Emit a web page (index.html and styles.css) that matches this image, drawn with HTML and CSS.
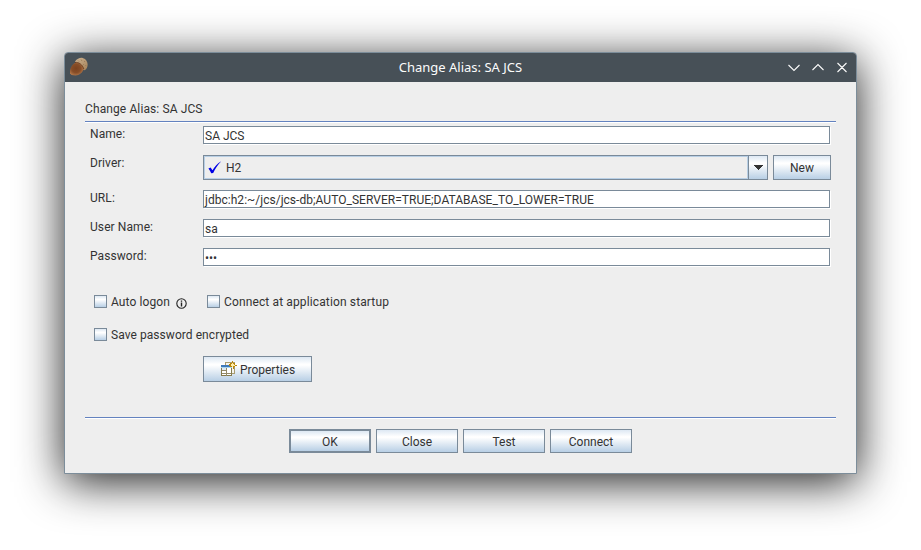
FILE: index.html
```html
<!DOCTYPE html>
<html lang="en">
<head>
<meta charset="utf-8">
<title>Change Alias: SA JCS</title>
<link rel="stylesheet" href="styles.css">
</head>
<body>
<main class="window">
  <header class="titlebar">
    <svg class="acorn" width="20" height="20" viewBox="0 0 20 20">
      <defs>
        <radialGradient id="nut" cx=".45" cy=".45" r=".6"><stop offset="0" stop-color="#7a4220"/><stop offset=".55" stop-color="#874d27"/><stop offset="1" stop-color="#b57a4c"/></radialGradient>
        <linearGradient id="cap" x1="0" y1="0" x2="1" y2="1"><stop offset="0" stop-color="#cdb392"/><stop offset="1" stop-color="#a68258"/></linearGradient>
      </defs>
      <path d="M6 4.500C8 2 10 .7 13 .8L16 2C18 4 19 6 18.500 9 18 11.500 16.500 13.200 15 13.200Z" fill="url(#cap)"/>
      <path d="M5 6.500C8 4 13 7 14.600 11.500 14.500 15 10 18.500 6.500 18.500L2.500 18 1 16.200C.6 12.500 2 9 5 6.500Z" fill="url(#nut)"/>
      <path d="M6 5.500C9.500 4.800 13.500 7.500 14.800 12" fill="none" stroke="#6b4023" stroke-width=".9"/>
      <path d="M9 3.500l1 1M12 2.500l1 1.500M15 4l1 1M14 7l1 1M16.500 8l.6 1" stroke="#94764f" stroke-width=".7"/>
    </svg>
    <h1 class="title">Change Alias: SA JCS</h1>
    <svg class="controls" width="60" height="12" viewBox="0 0 60 12">
      <path d="M.5 3L6 8.500l5.500-5.500M24.500 8L30 2.500l5.500 5.500M49.500 1l9 9M58.500 1l-9 9"/>
    </svg>
  </header>
  <section class="content">
    <h2 class="heading">Change Alias: SA JCS</h2>
    <hr class="rule">
    <div class="form">
      <div class="row"><span class="label">Name:</span><div class="field">SA JCS</div></div>
      <div class="row driver"><span class="label">Driver:</span>
        <div class="combo">
          <div class="value">
            <svg width="14" height="14" viewBox="0 0 14 14"><path d="M.4 7.500L2.600 6.600 4.500 9.300C6.500 5.800 9.500 2.200 13.300.3 9.700 4 7 8 5.200 12L3.200 12.300C2.700 10.800 1.700 9 .4 7.500Z" fill="#0000e6"/></svg>
            <span>H2</span>
          </div>
          <div class="arrow"><svg width="10" height="5" shape-rendering="crispEdges"><path d="M0 0h10L5 5Z" fill="#333"/></svg></div>
        </div>
        <div class="button new">New</div>
      </div>
      <div class="row"><span class="label">URL:</span><div class="field url">jdbc:h2:~/jcs/jcs-db;AUTO_SERVER=TRUE;DATABASE_TO_LOWER=TRUE</div></div>
      <div class="row"><span class="label">User Name:</span><div class="field">sa</div></div>
      <div class="row"><span class="label">Password:</span><div class="field">•••</div></div>
    </div>
    <div class="checks">
      <div class="check auto"><i class="box"></i><span>Auto logon</span>
        <svg class="info" width="11" height="11" viewBox="0 0 11 11"><circle cx="5.500" cy="5.500" r="4.700" fill="none" stroke="#222" stroke-width="1.100"/><path d="M5.500 2.500v1.300M5.500 4.500v4" stroke="#222" stroke-width="1.400"/></svg>
      </div>
      <div class="check startup"><i class="box"></i><span>Connect at application startup</span></div>
    </div>
    <div class="checks save"><div class="check"><i class="box"></i><span>Save password encrypted</span></div></div>
    <div class="button properties">
      <svg width="16" height="16" viewBox="0 0 16 16" shape-rendering="crispEdges">
        <path d="M4.500 4V1.500h9V12.500H11" fill="#f4f4ee" stroke="#a99c70"/>
        <path d="M.5 5.500h10v9H.5Z" fill="#fff" stroke="#857b4d"/>
        <path d="M0 4h11v2H0Z" fill="#3e79b9"/><path d="M0 6h11v1H0Z" fill="#a9d5f0"/>
        <path d="M1 7h4v2H1Z" fill="#dbe9f5"/>
        <path d="M5.500 7v8M1 9.500h4M1 12.500h9" fill="none" stroke="#938967"/>
        <path d="M11 0h1v2h2v2h2v1h-2v1h-1v2h-1V6H9V5H8V3h1V2h2Z" fill="#b8860b"/><path d="M11 2h1v1h1v1h1v1h-2v1h-1V5h-1V3h1Z" fill="#ffedaa"/>
      </svg><span>Properties</span>
    </div>
    <hr class="rule bottom">
    <div class="actions">
      <div class="button default">OK</div><div class="button">Close</div><div class="button">Test</div><div class="button">Connect</div>
    </div>
  </section>
</main>
</body>
</html>
```
FILE: styles.css
```css
* { box-sizing: border-box; }
body {
  margin: 0;
  height: 550px;
  padding: 52px 64px 0;
  background: #fff;
  overflow: hidden;
  font: 12px/14px Roboto, sans-serif;
  color: #333;
}
.window {
  width: 793px;
  height: 422px;
  border: 1px solid #7c8d9a;
  border-radius: 4px 4px 0 0;
  background: #eee;
  box-shadow: 0 8px 45px rgba(0, 0, 0, .88);
  overflow: hidden;
}
.titlebar {
  height: 29px;
  background: #475057;
  display: grid;
  grid-template-columns: 80px 1fr 80px;
  align-items: center;
  padding: 0 8px 0 4px;
}
.acorn { margin-bottom: 1px; }
.title { margin: 0; padding: 0 0 2px 4px; text-align: center; color: #fcfcfc; font: 13px/18px "Noto Sans", sans-serif; }
.controls { justify-self: end; fill: none; stroke: #fcfcfc; stroke-width: 1.1; }
.content { padding: 20px 20px 0; display: flex; flex-direction: column; }
.heading { margin: 0; height: 19px; font-size: 12px; font-weight: 400; line-height: 14px; letter-spacing: .11px; }
.rule { width: 751px; height: 2px; margin: 0; border: 0; border-top: 1px solid #6382bf; background: #fff; }
.form { padding: 3px 0 0 5px; display: flex; flex-direction: column; gap: 10px; }
.row { display: grid; grid-template-columns: 113px 628px; height: 19px; }
.row.driver { grid-template-columns: 113px 565px 58px; height: 25px; }
.label { line-height: 17px; letter-spacing: .08px; }
.field {
  background: #fff;
  border: 1px solid #7a8a99;
  width: 627px;
  height: 18px;
  padding-left: 1px;
  line-height: 18px;
  box-shadow: 1px 1px #fff;
  white-space: nowrap;
}
.url { letter-spacing: .03px; }
.combo { display: flex; border: 1px solid #7a8a99; }
.value { flex: 1; display: flex; align-items: center; gap: 4px; padding-left: 3px; border: 1px solid #b8cfe5; }
.arrow { width: 19px; border-left: 1px solid #7a8a99; display: flex; align-items: center; justify-content: center; }
.arrow, .button, .box { background: linear-gradient(#dde8f3 0, #fff 30%, #fff 34%, #b8cfe5 100%); }
.button { border: 1px solid #7a8a99; width: 82px; height: 24px; padding-top: 2px; display: flex; align-items: center; justify-content: center; }
.new { width: 58px; height: 25px; margin-left: 5px; padding-top: 0; }
.checks { display: flex; margin: 28px 0 0 9px; height: 14px; }
.check { display: flex; align-items: center; height: 14px; letter-spacing: .06px; }
.check.auto { width: 113px; letter-spacing: .1px; }
.check.startup { letter-spacing: .13px; }
.box { width: 13px; height: 13px; border: 1px solid #7a8a99; margin: 0 4px 1px 0; }
.info { margin: 3px 0 0 6px; }
.checks.save { margin-top: 19px; }
.properties { width: 109px; height: 26px; margin: 14px 0 0 118px; gap: 4px; }
.properties svg { margin: 0 -1px 2px 1px; }
.rule.bottom { margin-top: 35px; }
.actions { display: flex; gap: 5px; margin: 10px 0 0 204px; }
.default { border-width: 2px; }
```
